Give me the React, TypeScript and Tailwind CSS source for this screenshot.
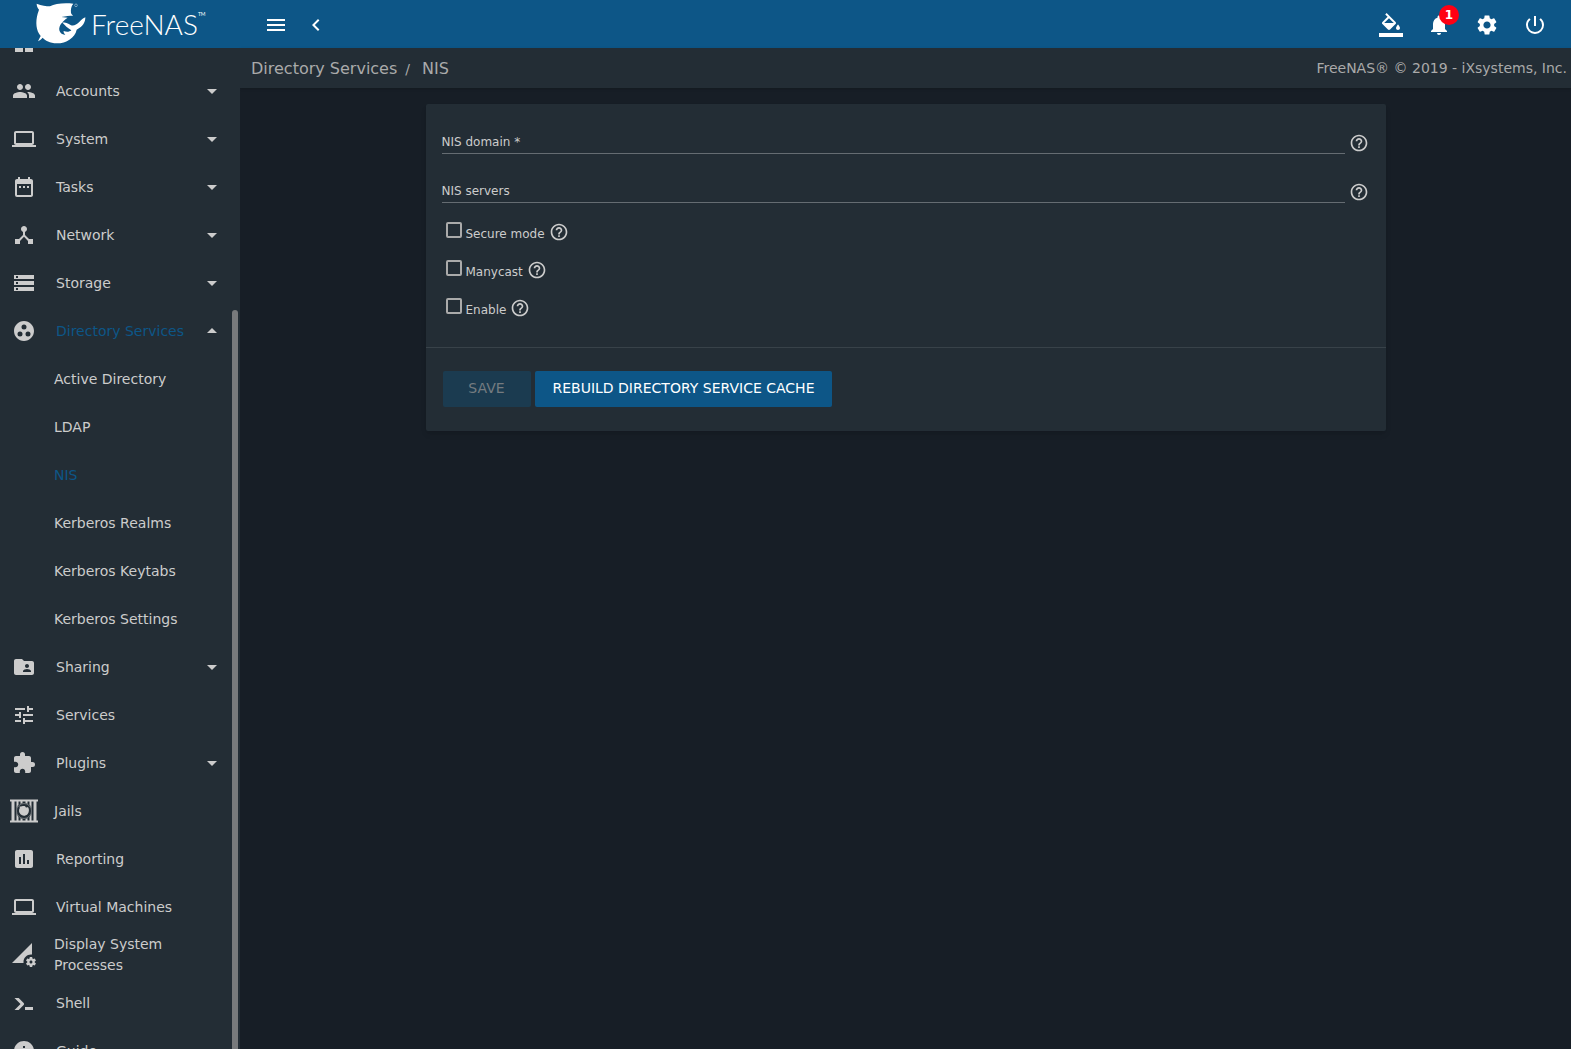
import * as React from 'react';
import type { IconType } from 'react-icons';
import {
  MdArrowDropDown,
  MdArrowDropUp,
  MdAssessment,
  MdChevronLeft,
  MdDashboard,
  MdDateRange,
  MdDeviceHub,
  MdExtension,
  MdFolderShared,
  MdGroupWork,
  MdHelpOutline,
  MdInfo,
  MdLaptop,
  MdMenu,
  MdNotifications,
  MdPeople,
  MdPermDataSetting,
  MdPowerSettingsNew,
  MdSettings,
  MdStorage,
  MdTune,
} from 'react-icons/md';
import { clsx } from 'clsx';

interface NavItem {
  label: string;
  icon: IconType | React.FC<{ className?: string }>;
  expandable?: boolean;
  active?: boolean;
  // wider icon slot, label sits a little closer
  custom?: boolean;
  children?: { label: string; active?: boolean }[];
}

function JailIcon({ className }: { className?: string }) {
  return (
    <svg viewBox="0 0 28 24" className={className} fill="currentColor" aria-hidden="true">
      <path d="M0 .5h28v2H0zM0 21.500h28v2H0zM1.500 2h3v20h-3zM6.500 2h2v20h-2zM19.500 2h2v20h-2zM23.500 2h3v20h-3zM10.500 2h2v20h-2zM15.500 2h2v20h-2z" />
      <circle cx="14" cy="12" r="8" fill="#232d35" />
      <circle cx="14" cy="12" r="7.500" fill="none" stroke="currentColor" strokeWidth=".7" opacity=".6" />
      <path d="M9.500 7.500c1.500.3 3-.8 5-.6 1 .1 1 1.300 1.600 1.500.8.2 1.500-.4 2-.1 1.400 2 1 5.200-.6 6.900-2 2-5.200 1.900-7 .1-1.800-1.900-1.900-4.500-.7-6.400z" />
    </svg>
  );
}

function ShellIcon({ className }: { className?: string }) {
  return (
    <svg viewBox="0 0 24 24" className={className} fill="currentColor" aria-hidden="true">
      <path d="M13 19v-3h8v3h-8zM8.500 13L2.470 7h4.240l4.960 5c.58.58.58 1.530 0 2.110L6.730 19H2.500l6-6z" />
    </svg>
  );
}

function ColorFillIcon({ className }: { className?: string }) {
  return (
    <svg viewBox="0 0 24 24" className={className} fill="currentColor" aria-hidden="true">
      <path d="M16.560 8.940L7.620 0 6.210 1.410l2.380 2.380-5.150 5.150c-.59.59-.59 1.540 0 2.120l5.500 5.500c.29.29.68.44 1.060.44s.77-.15 1.060-.44l5.500-5.500c.59-.58.59-1.530 0-2.120zM5.210 10L10 5.210 14.790 10H5.210zM19 11.500s-2 2.170-2 3.500c0 1.100.9 2 2 2s2-.9 2-2c0-1.330-2-3.500-2-3.500z" />
      <path d="M0 20h24v4H0z" />
    </svg>
  );
}

const navItems: NavItem[] = [
  { label: 'Dashboard', icon: MdDashboard },
  { label: 'Accounts', icon: MdPeople, expandable: true },
  { label: 'System', icon: MdLaptop, expandable: true },
  { label: 'Tasks', icon: MdDateRange, expandable: true },
  { label: 'Network', icon: MdDeviceHub, expandable: true },
  { label: 'Storage', icon: MdStorage, expandable: true },
  {
    label: 'Directory Services',
    icon: MdGroupWork,
    expandable: true,
    active: true,
    children: [
      { label: 'Active Directory' },
      { label: 'LDAP' },
      { label: 'NIS', active: true },
      { label: 'Kerberos Realms' },
      { label: 'Kerberos Keytabs' },
      { label: 'Kerberos Settings' },
    ],
  },
  { label: 'Sharing', icon: MdFolderShared, expandable: true },
  { label: 'Services', icon: MdTune },
  { label: 'Plugins', icon: MdExtension, expandable: true },
  { label: 'Jails', icon: JailIcon, custom: true },
  { label: 'Reporting', icon: MdAssessment },
  { label: 'Virtual Machines', icon: MdLaptop },
  { label: 'Display System Processes', icon: MdPermDataSetting, custom: true },
  { label: 'Shell', icon: ShellIcon },
  { label: 'Guide', icon: MdInfo },
];

const options = [
  { id: 'secure-mode', label: 'Secure mode' },
  { id: 'manycast', label: 'Manycast' },
  { id: 'enable', label: 'Enable' },
];

function Logo() {
  return (
    <a href="#" aria-label="FreeNAS" className="flex h-12 w-60 shrink-0 items-center pl-[35px] text-white">
      <svg viewBox="105 5 156 126" className="mr-1 mb-0.5 h-[42px] w-[52px] shrink-0" fill="currentColor" aria-hidden="true">
        <path d="M110 10c15 6 28 7 40 8 15-8 40-11 70-8-7 8-8 18-7 28 1 3 4 6 6 8-11 0-21 1-35 4l19 2c-15 10-27 23-25 38 2 9 10 14 18 13-4-4-6-7-5-11 9 4 17 3 23-2-11-6-19-14-28-24 9 0 19 3 27 9 9 3 17-3 24-9 7-8 13-12 19-15 0 14-6 27-26 37-5 24-30 41-60 41-20-1-35-9-42-17-4 4-8 8-14 11l8-16C108 90 106 65 113 40c2-6 3-9 4-12-5-6-7-12-7-18z" />
        <circle cx="228" cy="15" r="4" fill="none" stroke="currentColor" strokeWidth="2" opacity=".6" />
      </svg>
      <span className="font-['Lato'] text-[28px] leading-9 font-light">FreeNAS</span>
      <span className="self-start pt-2.5 font-['Lato'] text-[5px] leading-2">TM</span>
    </a>
  );
}

function NavRow({ item }: { item: NavItem }) {
  const Icon = item.icon;
  const Arrow = item.children ? MdArrowDropUp : MdArrowDropDown;

  return (
    <li>
      <a href="#" className={clsx('flex h-12 items-center pr-4', item.custom ? 'gap-4 pl-2.5' : 'gap-5 pl-3')}>
        <Icon className={clsx('h-6 shrink-0', item.custom ? 'w-7' : 'w-6')} />
        <span
          className={clsx(
            'min-w-0 flex-1 leading-[21px]',
            item.expandable && 'whitespace-nowrap',
            item.active && 'text-[#0d5687]'
          )}
        >
          {item.label}
        </span>
        {item.expandable && <Arrow className="h-6 w-6 shrink-0" />}
      </a>
      {item.children && (
        <ul>
          {item.children.map((child) => (
            <li key={child.label}>
              <a href="#" className={clsx('flex h-12 items-center pl-[54px]', child.active && 'text-[#0d5687]')}>
                {child.label}
              </a>
            </li>
          ))}
        </ul>
      )}
    </li>
  );
}

function Sidebar() {
  return (
    <nav className="relative w-60 shrink-0 overflow-hidden bg-[#232d35] text-sm text-[#cccccc]">
      {/* List is scrolled past part of the first row */}
      <ul className="-mt-[29px]">
        {navItems.map((item) => (
          <NavRow key={item.label} item={item} />
        ))}
      </ul>
      <div className="absolute top-[262px] right-0.5 bottom-0 w-1.5 rounded-t-full bg-[#787a7c]" />
    </nav>
  );
}

function TextField({ id, label, required }: { id: string; label: string; required?: boolean }) {
  return (
    <div className="flex h-[49px] items-start gap-1">
      <div className="relative flex-1">
        <label htmlFor={id} className="absolute top-2 left-0 text-xs leading-5">
          {label}
          {required && ' *'}
        </label>
        <input
          id={id}
          type="text"
          required={required}
          className="block h-[30px] w-full border-b border-[#656c72] bg-transparent text-xs shadow-none outline-none"
        />
      </div>
      <button type="button" aria-label={`Help for ${label}`} className="mt-[9px]">
        <MdHelpOutline className="h-5 w-5" />
      </button>
    </div>
  );
}

function NisForm() {
  return (
    <form className="mx-auto w-full max-w-[960px] rounded-xs bg-[#232d35] text-[#cccccc] shadow-md">
      <div className="pt-5 pr-[17px] pl-4">
        <TextField id="nis-domain" label="NIS domain" required />
        <TextField id="nis-servers" label="NIS servers" />
        <div className="pb-[11px]">
          {options.map((option) => (
            <div key={option.id} className="flex h-[38px] items-start gap-1 pl-1">
              <input
                id={option.id}
                type="checkbox"
                className="h-4 w-4 appearance-none rounded-xs border-2 border-[#aaaaaa]"
              />
              <label htmlFor={option.id} className="pt-0.5 text-xs leading-5">
                {option.label}
              </label>
              <button type="button" aria-label={`Help for ${option.label}`}>
                <MdHelpOutline className="h-5 w-5" />
              </button>
            </div>
          ))}
        </div>
      </div>
      <div className="flex gap-1 border-t border-[#384249] px-[17px] pt-[23px] pb-6 text-sm">
        <button type="submit" disabled className="h-9 w-[88px] rounded-xs bg-[#1b3b50] pb-0.5 text-[#757b80]">
          SAVE
        </button>
        <button type="button" className="h-9 rounded-xs bg-[#0d5687] px-[18px] pb-0.5 text-white">
          REBUILD DIRECTORY SERVICE CACHE
        </button>
      </div>
    </form>
  );
}

export default function App() {
  return (
    <div className="flex h-screen flex-col overflow-hidden bg-[#171e26] font-['DejaVu_Sans',sans-serif]">
      <header className="flex h-12 shrink-0 items-center bg-[#0d5687] text-white">
        <Logo />
        <div className="flex flex-1 items-center gap-4 pt-0.5 pl-6">
          <button type="button" aria-label="Toggle menu">
            <MdMenu className="h-6 w-6" />
          </button>
          <button type="button" aria-label="Collapse menu">
            <MdChevronLeft className="h-6 w-6" />
          </button>
        </div>
        <div className="flex items-center gap-6 pt-0.5 pr-6">
          <button type="button" aria-label="Change theme">
            <ColorFillIcon className="h-6 w-6" />
          </button>
          <button type="button" aria-label="Notifications" className="relative">
            <MdNotifications className="h-6 w-6" />
            <span className="absolute -top-2 -right-2 flex h-5 w-5 items-center justify-center rounded-full bg-[#ff0013] text-xs font-bold">
              1
            </span>
          </button>
          <button type="button" aria-label="Settings">
            <MdSettings className="h-6 w-6" />
          </button>
          <button type="button" aria-label="Power">
            <MdPowerSettingsNew className="h-6 w-6" />
          </button>
        </div>
      </header>

      <div className="flex min-h-0 flex-1">
        <Sidebar />
        <div className="flex min-w-0 flex-1 flex-col">
          <div className="flex h-10 shrink-0 items-center justify-between bg-[#232d35] pr-1 pl-[11px] text-[#aaaaaa] shadow-sm">
            <div className="flex items-center gap-2 pt-0.5 text-base">
              <a href="#">Directory Services</a>
              <span className="text-sm">/</span>
              <a href="#" className="pl-1">
                NIS
              </a>
            </div>
            <span className="text-sm">FreeNAS® © 2019 - iXsystems, Inc.</span>
          </div>
          <main className="p-4">
            <NisForm />
          </main>
        </div>
      </div>
    </div>
  );
}
